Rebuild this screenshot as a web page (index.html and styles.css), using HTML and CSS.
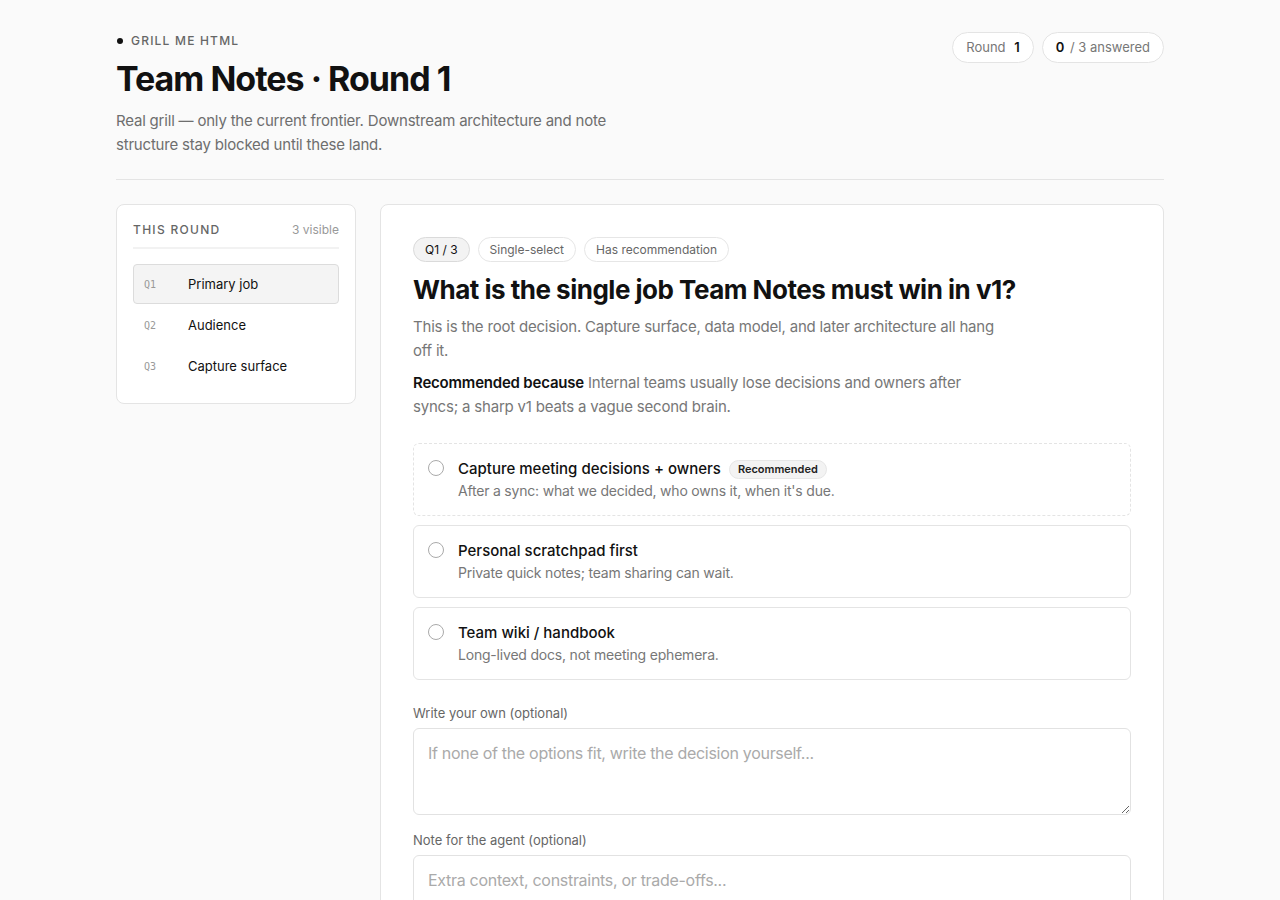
FILE: index.html
```html
<!DOCTYPE html>
<html lang="en">

<head>
    <meta charset="UTF-8">
    <title>Team Notes · Round 1</title>
    <link rel="stylesheet" href="styles.css">
</head>

<body>
    <div class="page">

        <header class="top">
            <div class="intro">
                <div class="eyebrow"><span class="dot"></span>GRILL ME HTML</div>
                <h1>Team Notes · Round 1</h1>
                <p>Real grill — only the current frontier. Downstream architecture and note structure stay blocked until these land.</p>
            </div>
            <div class="stats">
                <span class="pill">Round <b class="after">1</b></span>
                <span class="pill"><b class="before">0</b> / 3 answered</span>
            </div>
        </header>

        <div class="layout">
            <!-- lista de preguntas de la ronda -->
            <aside class="side">
                <div class="side-head">
                    <span class="side-title">THIS ROUND</span>
                    <span class="side-count">3 visible</span>
                </div>
                <a class="qitem active" href="#"><span class="qnum">Q1</span>Primary job</a>
                <a class="qitem" href="#"><span class="qnum">Q2</span>Audience</a>
                <a class="qitem" href="#"><span class="qnum">Q3</span>Capture surface</a>
            </aside>

            <main class="card">
                <div class="chips">
                    <span class="chip dark">Q1 / 3</span>
                    <span class="chip">Single-select</span>
                    <span class="chip">Has recommendation</span>
                </div>

                <h2>What is the single job Team Notes must win in v1?</h2>
                <p class="desc">This is the root decision. Capture surface, data model, and later architecture all hang off it.</p>
                <p class="desc"><strong>Recommended because</strong> Internal teams usually lose decisions and owners after syncs; a sharp v1 beats a vague second brain.</p>

                <div class="options">
                    <label class="option recommended">
                        <input type="radio" name="q1">
                        <span class="opt-body">
                            <span class="opt-title">Capture meeting decisions + owners <span class="badge">Recommended</span></span>
                            <span class="opt-desc">After a sync: what we decided, who owns it, when it's due.</span>
                        </span>
                    </label>
                    <label class="option">
                        <input type="radio" name="q1">
                        <span class="opt-body">
                            <span class="opt-title">Personal scratchpad first</span>
                            <span class="opt-desc">Private quick notes; team sharing can wait.</span>
                        </span>
                    </label>
                    <label class="option">
                        <input type="radio" name="q1">
                        <span class="opt-body">
                            <span class="opt-title">Team wiki / handbook</span>
                            <span class="opt-desc">Long-lived docs, not meeting ephemera.</span>
                        </span>
                    </label>
                </div>

                <label class="field-label" for="own">Write your own (optional)</label>
                <textarea id="own" placeholder="If none of the options fit, write the decision yourself..."></textarea>

                <label class="field-label" for="note">Note for the agent (optional)</label>
                <textarea id="note" placeholder="Extra context, constraints, or trade-offs..."></textarea>
            </main>
        </div>

    </div>
</body>

</html>
```

FILE: styles.css
```css
body {
    font-family: Inter, "Noto Sans", Arial, sans-serif;
    background-color: #fafafa;
    color: #111;
    margin: 0;
}

.page {
    max-width: 1048px;
    margin: 0 auto;
    padding: 32px 0 40px;
}

.top {
    display: flex;
    justify-content: space-between;
    align-items: flex-start;
    padding-bottom: 22px;
    border-bottom: 1px solid #e4e4e4;
}

.eyebrow {
    display: flex;
    align-items: center;
    gap: 8px;
    font-size: 12px;
    font-weight: 500;
    letter-spacing: 1.2px;
    color: #666;
    line-height: 18px;
}

.dot {
    width: 6px;
    height: 6px;
    border-radius: 50%;
    background: #111;
    margin-left: 1px;
}

h1 {
    font-size: 34px;
    font-weight: 700;
    letter-spacing: -1px;
    margin: 8px 0 9px;
    line-height: 42px;
}

.intro p {
    margin: 0;
    max-width: 500px;
    font-size: 15px;
    line-height: 24px;
    letter-spacing: -0.2px;
    color: #6e6e6e;
}

.stats {
    display: flex;
    gap: 8px;
}

.pill {
    border: 1px solid #e4e4e4;
    background: white;
    border-radius: 999px;
    padding: 6px 13px;
    font-size: 13px;
    line-height: 17px;
    color: #777;
}

.pill b {
    color: #111;
    font-weight: 600;
}

.pill .after {
    margin-left: 5px;
}

.pill .before {
    margin-right: 2px;
}

.layout {
    display: flex;
    align-items: flex-start;
    gap: 24px;
    margin-top: 24px;
}

.side {
    width: 240px;
    flex-shrink: 0;
    box-sizing: border-box;
    background: white;
    border: 1px solid #e4e4e4;
    border-radius: 8px;
    padding: 17px 16px 16px;
}

.side-head {
    display: flex;
    justify-content: space-between;
    align-items: center;
    padding-bottom: 10px;
    border-bottom: 2px solid #f2f2f2;
    margin-bottom: 15px;
}

.side-title {
    font-size: 12px;
    font-weight: 500;
    letter-spacing: 1.3px;
    color: #666;
}

.side-count {
    font-size: 12px;
    color: #999;
}

.qitem {
    display: flex;
    align-items: center;
    height: 40px;
    box-sizing: border-box;
    padding: 0 10px;
    margin-bottom: 1px;
    border: 1px solid transparent;
    border-radius: 4px;
    color: #111;
    text-decoration: none;
    font-size: 13px;
}

.qitem.active {
    background: #f4f4f4;
    border-color: #dcdcdc;
}

.qnum {
    width: 44px;
    font-family: "DejaVu Sans Mono", "Liberation Mono", monospace;
    font-size: 10px;
    color: #999;
}

.card {
    flex: 1;
    background: white;
    border: 1px solid #e4e4e4;
    border-radius: 8px;
    padding: 32px 32px 40px;
}

.chips {
    display: flex;
    gap: 8px;
}

.chip {
    border: 1px solid #e6e6e6;
    border-radius: 999px;
    padding: 4px 11px;
    font-size: 12px;
    line-height: 15px;
    color: #666;
}

.chip.dark {
    background: #f3f3f3;
    border-color: #dadada;
    color: #111;
}

h2 {
    font-size: 26px;
    font-weight: 700;
    letter-spacing: -0.5px;
    line-height: 32px;
    margin: 12px 0 9px;
}

.desc {
    max-width: 590px;
    font-size: 15px;
    line-height: 24px;
    letter-spacing: -0.2px;
    color: #777;
    margin: 0 0 8px;
}

.desc strong {
    color: #111;
    font-weight: 600;
}

.options {
    display: flex;
    flex-direction: column;
    gap: 9px;
    margin: 24px 0 25px;
}

.option {
    display: flex;
    align-items: flex-start;
    gap: 14px;
    border: 1px solid #e4e4e4;
    border-radius: 6px;
    padding: 14px 14px 14px;
    cursor: pointer;
}

.option.recommended {
    border-style: dashed;
}

.option input {
    appearance: none;
    width: 16px;
    height: 16px;
    margin: 2px 0 0;
    border: 1px solid #aaa;
    border-radius: 50%;
    background: white;
    flex-shrink: 0;
}

.opt-body {
    display: flex;
    flex-direction: column;
    gap: 1px;
}

.opt-title {
    display: flex;
    align-items: center;
    gap: 8px;
    font-size: 15px;
    font-weight: 500;
    line-height: 22px;
}

.opt-desc {
    font-size: 14px;
    line-height: 20px;
    letter-spacing: -0.2px;
    color: #777;
}

.badge {
    background: #f3f3f3;
    border: 1px solid #e6e6e6;
    border-radius: 999px;
    padding: 1px 8px;
    font-size: 11px;
    font-weight: 600;
    line-height: 15px;
    color: #222;
}

.field-label {
    display: block;
    font-size: 13px;
    color: #666;
    margin-bottom: 7px;
}

textarea {
    display: block;
    width: 100%;
    height: 87px;
    box-sizing: border-box;
    border: 1px solid #e2e2e2;
    border-radius: 6px;
    padding: 14px;
    margin-bottom: 17px;
    font-family: inherit;
    font-size: 16px;
    letter-spacing: -0.3px;
    color: #111;
}

textarea::placeholder {
    color: #aaa;
}
```
